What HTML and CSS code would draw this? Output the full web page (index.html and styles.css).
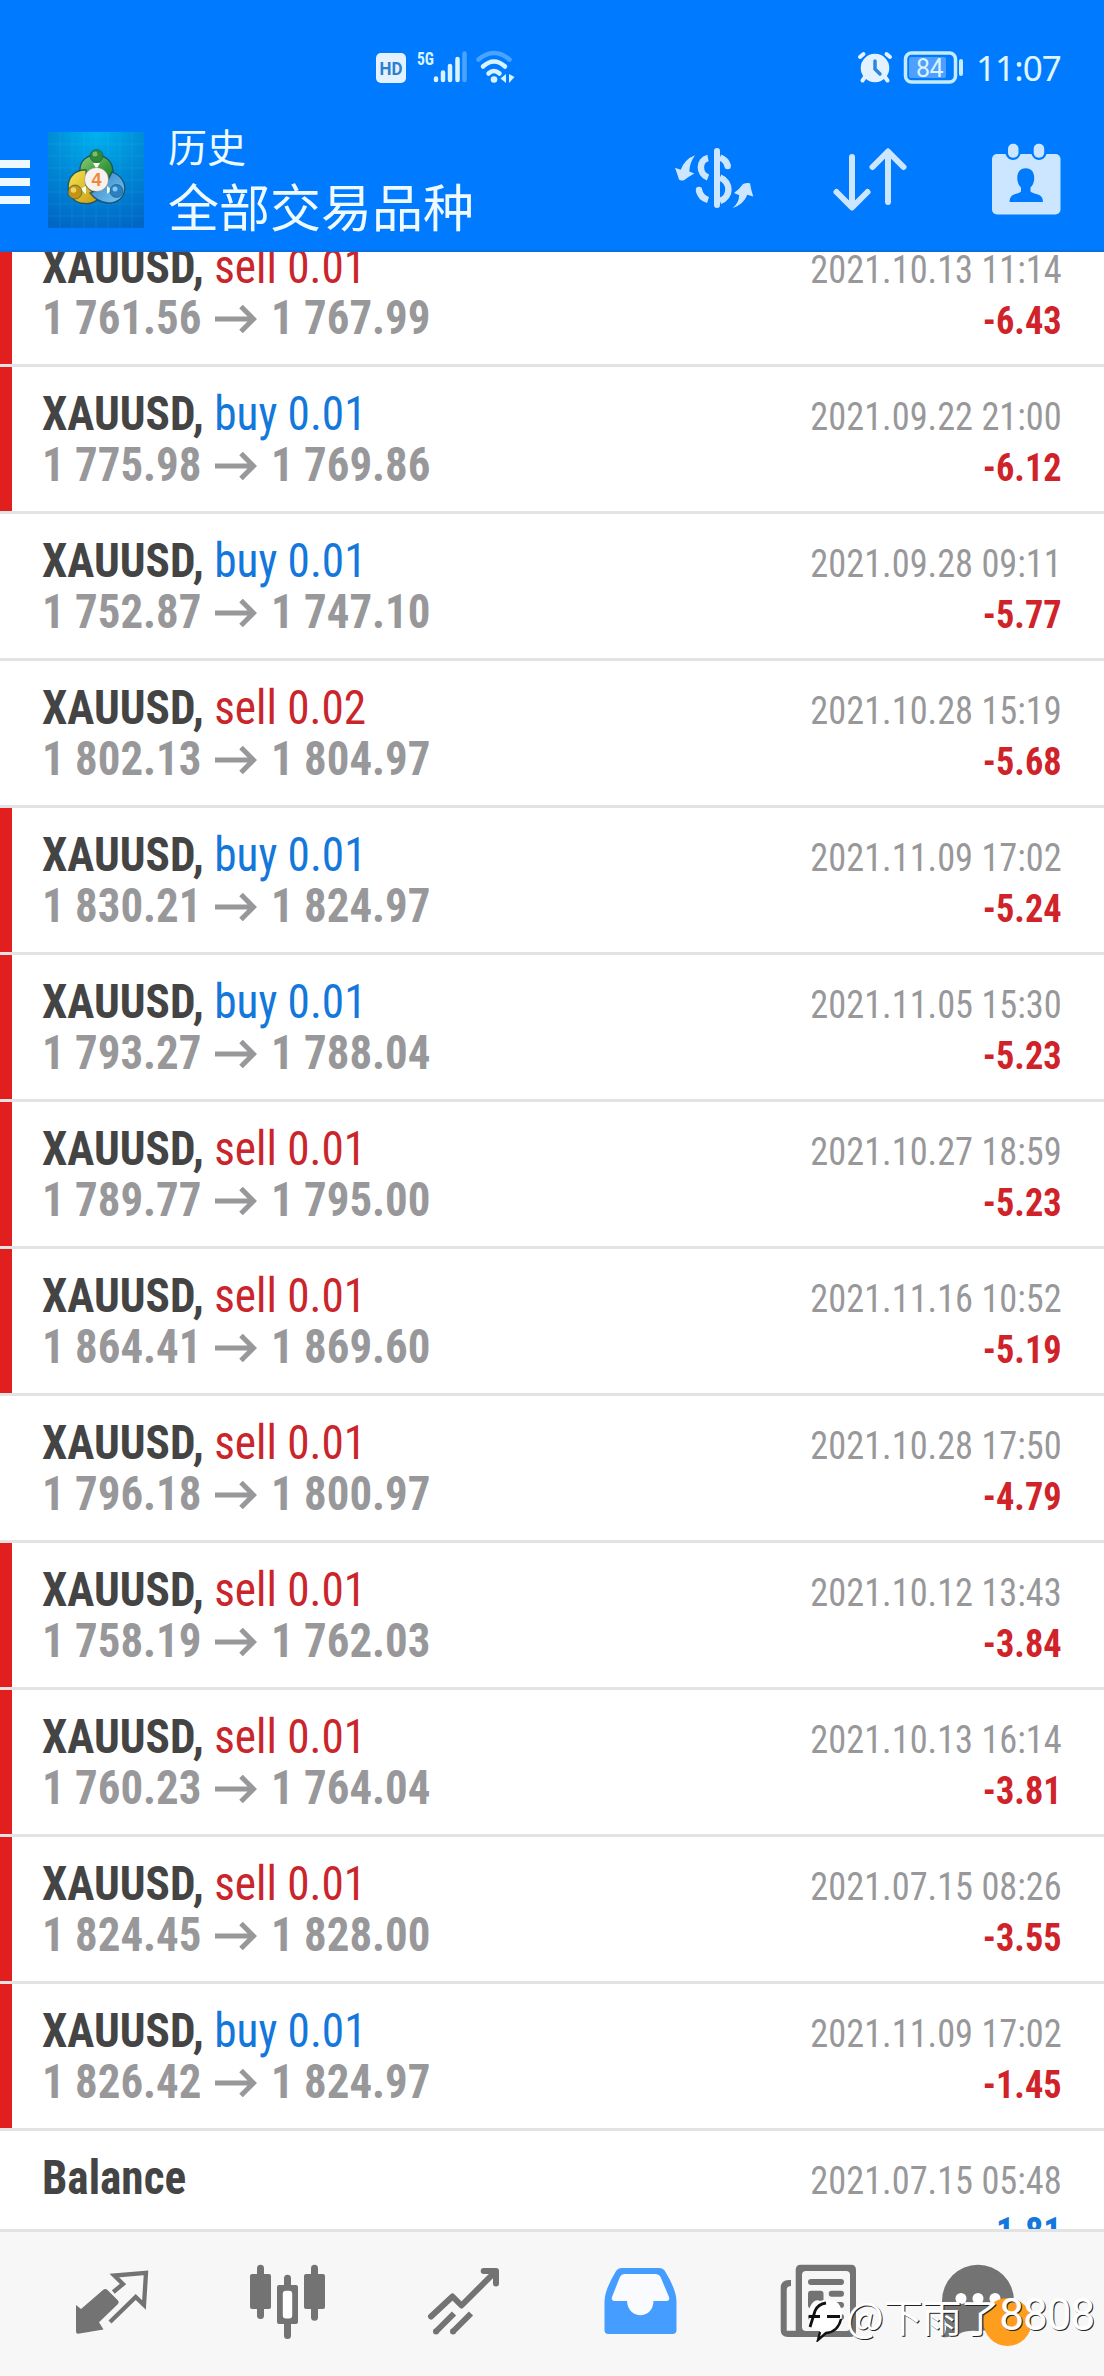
FILE: index.html
```html
<!DOCTYPE html>
<html lang="zh-CN">
<head>
<meta charset="utf-8">
<title>历史</title>
<link rel="stylesheet" href="styles.css">
</head>
<body>
<svg class="defs" width="0" height="0">
  <symbol id="arrow" viewBox="0 0 42 28"><path d="M0 14H39M26 1.5L38.500 14L26 26.500" fill="none" stroke="currentColor" stroke-width="5"/></symbol>
</svg>
<header class="header">
  <div class="status">
    <svg class="status-left" viewBox="370 45 150 45">
      <rect x="376" y="53" width="30" height="30" rx="5" fill="#e4f2ff"/>
      <text x="391" y="75" class="hd" text-anchor="middle" textLength="23" lengthAdjust="spacingAndGlyphs">HD</text>
      <text x="417" y="65" class="net" textLength="17" lengthAdjust="spacingAndGlyphs">5G</text>
      <g stroke="#d8f4ff" stroke-width="4.500" stroke-linecap="round"><path d="M436 78.500V80M443 72.500V80M450 66V80M457.500 59V80"/><path d="M464.500 53.500V80" stroke="#4aa4ff"/></g>
      <g fill="none" stroke-linecap="round" stroke-width="4.500"><path d="M478.500 59.500Q494 46.500 509.500 59.500" stroke="#4aa4ff"/><path d="M483 66.500Q494 56.500 505 66.500M488.500 73.500Q494 68.500 499.500 73.500" stroke="#d8f4ff"/></g>
      <circle cx="494" cy="79.500" r="3.300" fill="#d8f4ff"/>
      <path d="M506 74v9l-5.500-4.500zM509 74v9l5.500-6z" fill="#d8f4ff"/>
    </svg>
    <svg class="status-right" viewBox="850 45 120 45">
      <g stroke="#e4f2ff" stroke-width="4" stroke-linecap="round"><path d="M860 57l3.500-3M890 57l-3.500-3M865 77l-2.500 3.500M885 77l2.500 3.500"/></g>
      <circle cx="875" cy="68" r="14.300" fill="#e4f2ff"/>
      <path d="M875 61v8l5 5" fill="none" stroke="#2b86e0" stroke-width="3.500" stroke-linecap="round"/>
      <rect x="905.500" y="53" width="50" height="29" rx="6" fill="none" stroke="#c4ebff" stroke-width="3.500"/>
      <rect x="909" y="57" width="37" height="21" rx="2" fill="#4f9fff"/>
      <rect x="959" y="59" width="4" height="17" rx="2" fill="#c4ebff"/>
      <text x="929.500" y="76.500" class="battery" text-anchor="middle">84</text>
    </svg>
    <time class="clock">11:07</time>
  </div>
  <div class="appbar">
    <div class="menu"><i></i><i></i><i></i></div>
    <svg class="logo" viewBox="0 0 96 96">
      <defs>
        <radialGradient id="bg" cx=".5" cy="0" r="1.050"><stop offset="0" stop-color="#00b2ef"/><stop offset=".5" stop-color="#0089d6"/><stop offset="1" stop-color="#0067c6"/></radialGradient>
        <linearGradient id="gr" x2="1" y2="1"><stop offset="0" stop-color="#8fd07a"/><stop offset=".6" stop-color="#3b9a3c"/><stop offset="1" stop-color="#1f7a2c"/></linearGradient>
        <linearGradient id="ye" x2="1" y2="1"><stop offset="0" stop-color="#f6e650"/><stop offset="1" stop-color="#c79a10"/></linearGradient>
        <linearGradient id="bl" x2="1" y2="1"><stop offset="0" stop-color="#2f80c4"/><stop offset="1" stop-color="#7cc8f4"/></linearGradient>
      </defs>
      <rect width="96" height="96" fill="url(#bg)"/>
      <path d="M12 0V96M24 0V96M36 0V96M48 0V96M60 0V96M72 0V96M84 0V96M0 12H96M0 24H96M0 36H96M0 48H96M0 60H96M0 72H96M0 84H96" stroke="#5fc4f5" stroke-width=".6" opacity=".22"/>
      <g stroke="#123f50" stroke-opacity=".75" stroke-width="1.300">
        <path d="M32 40C30 17 67 17 65 42L60 50L36 44Z" fill="url(#gr)"/>
        <path d="M38 38C15 37 14 71 37 71.500Q46 72 51 66L38 54Z" fill="url(#ye)"/>
        <path d="M64 40C83 47 80 71 60 71Q49 70 42 61L56 56Z" fill="url(#bl)"/>
      </g>
      <path d="M45 31h7l-3.500 6zM32 57l6-3v8zM59 54l5 4-5 4z" fill="#f4ffe8"/>
      <g stroke="#123f50" stroke-opacity=".5"><circle cx="48.500" cy="24" r="6.500" fill="#2f8a38"/><circle cx="27" cy="60" r="7" fill="#c39414"/><circle cx="68.500" cy="59" r="6.500" fill="#2b80c4"/></g>
      <circle cx="47" cy="22" r="2.500" fill="#79bd72"/><circle cx="25.500" cy="58" r="2.800" fill="#eed462"/><circle cx="67" cy="57" r="2.500" fill="#81c7f1"/>
      <circle cx="48.500" cy="47.500" r="12" fill="#f7f2ee" stroke="#5a6a50" stroke-opacity=".4"/>
      <text x="48.500" y="54" class="four" text-anchor="middle">4</text>
    </svg>
    <div class="titles"><div class="title">历史</div><div class="subtitle">全部交易品种</div></div>
    <div class="actions">
      <svg viewBox="0 0 80 80">
        <rect x="40" y="8" width="6" height="60" rx="3" fill="#cce6ff"/>
        <g fill="none" stroke="#cce6ff" stroke-width="6.500"><path d="M34 18C24.500 20 24.500 34 34 37.500M46 17.500C50 19 53 22 53.500 26"/><path d="M46 37.500C57 42 57.500 57 46 61"/><path d="M25 50.500C26 55 29 58.500 34 60"/></g>
        <circle cx="53.700" cy="26" r="3.200" fill="#cce6ff"/><circle cx="25" cy="50" r="3.200" fill="#cce6ff"/>
        <path d="M21 15.300Q15.500 23 15.300 31.500L20.300 33.500Q14 37 10 40.300Q6.500 41 5 39.500Q3 33 1 27.700L6.700 29.700Q11 19 21 15.300ZM58.700 68Q65 63 65.200 55.300L60 53Q66 48.500 69 44Q73 42.500 76 43.300Q77 50 79.300 56.500L73.300 54.700Q70 64 58.700 68Z" fill="#cce6ff"/>
      </svg>
      <svg viewBox="0 0 80 80" fill="none" stroke="#cce6ff" stroke-width="6" stroke-linecap="round" stroke-linejoin="round"><path d="M22 17V67M6.500 52L22 67.500L37.500 52M58 62V12M42.500 27L58 11.500L73.500 27"/></svg>
      <svg viewBox="0 0 80 80">
        <rect x="6" y="14" width="68.500" height="60.500" rx="5" fill="#cce6ff"/>
        <path d="M19.500 13V14Q21 19.500 27 20Q33 19.500 34.500 14V13ZM45.500 13V14Q47 19.500 53 20Q59 19.500 60.500 14V13Z" fill="#007bff"/>
        <rect x="22" y="3.700" width="10.500" height="14" rx="5" fill="#cce6ff"/><rect x="47.700" y="3.700" width="10.500" height="14" rx="5" fill="#cce6ff"/>
        <path d="M39.700 28.300C46 28.300 48.500 33 48.200 39Q48 44 44.500 47.500V51.500Q46 53 52 54.500Q57 56 57 62H23.500Q23.500 56 28 54.500Q34 53 35 51.500V47.500Q31.500 44 31.300 39C31 33 33.500 28.300 39.700 28.300Z" fill="#007bff"/>
      </svg>
    </div>
  </div>
</header>

<main class="list">
  <div class="rows">
    <article class="row marked"><div class="deal"><p class="name"><b>XAUUSD,</b> <span class="sell">sell 0.01</span></p><p class="price"><span>1 761.56</span><svg><use href="#arrow"/></svg><span>1 767.99</span></p></div><div class="result"><time>2021.10.13 11:14</time><strong>-6.43</strong></div></article>
    <article class="row marked"><div class="deal"><p class="name"><b>XAUUSD,</b> <span class="buy">buy 0.01</span></p><p class="price"><span>1 775.98</span><svg><use href="#arrow"/></svg><span>1 769.86</span></p></div><div class="result"><time>2021.09.22 21:00</time><strong>-6.12</strong></div></article>
    <article class="row"><div class="deal"><p class="name"><b>XAUUSD,</b> <span class="buy">buy 0.01</span></p><p class="price"><span>1 752.87</span><svg><use href="#arrow"/></svg><span>1 747.10</span></p></div><div class="result"><time>2021.09.28 09:11</time><strong>-5.77</strong></div></article>
    <article class="row"><div class="deal"><p class="name"><b>XAUUSD,</b> <span class="sell">sell 0.02</span></p><p class="price"><span>1 802.13</span><svg><use href="#arrow"/></svg><span>1 804.97</span></p></div><div class="result"><time>2021.10.28 15:19</time><strong>-5.68</strong></div></article>
    <article class="row marked"><div class="deal"><p class="name"><b>XAUUSD,</b> <span class="buy">buy 0.01</span></p><p class="price"><span>1 830.21</span><svg><use href="#arrow"/></svg><span>1 824.97</span></p></div><div class="result"><time>2021.11.09 17:02</time><strong>-5.24</strong></div></article>
    <article class="row marked"><div class="deal"><p class="name"><b>XAUUSD,</b> <span class="buy">buy 0.01</span></p><p class="price"><span>1 793.27</span><svg><use href="#arrow"/></svg><span>1 788.04</span></p></div><div class="result"><time>2021.11.05 15:30</time><strong>-5.23</strong></div></article>
    <article class="row marked"><div class="deal"><p class="name"><b>XAUUSD,</b> <span class="sell">sell 0.01</span></p><p class="price"><span>1 789.77</span><svg><use href="#arrow"/></svg><span>1 795.00</span></p></div><div class="result"><time>2021.10.27 18:59</time><strong>-5.23</strong></div></article>
    <article class="row marked"><div class="deal"><p class="name"><b>XAUUSD,</b> <span class="sell">sell 0.01</span></p><p class="price"><span>1 864.41</span><svg><use href="#arrow"/></svg><span>1 869.60</span></p></div><div class="result"><time>2021.11.16 10:52</time><strong>-5.19</strong></div></article>
    <article class="row"><div class="deal"><p class="name"><b>XAUUSD,</b> <span class="sell">sell 0.01</span></p><p class="price"><span>1 796.18</span><svg><use href="#arrow"/></svg><span>1 800.97</span></p></div><div class="result"><time>2021.10.28 17:50</time><strong>-4.79</strong></div></article>
    <article class="row marked"><div class="deal"><p class="name"><b>XAUUSD,</b> <span class="sell">sell 0.01</span></p><p class="price"><span>1 758.19</span><svg><use href="#arrow"/></svg><span>1 762.03</span></p></div><div class="result"><time>2021.10.12 13:43</time><strong>-3.84</strong></div></article>
    <article class="row marked"><div class="deal"><p class="name"><b>XAUUSD,</b> <span class="sell">sell 0.01</span></p><p class="price"><span>1 760.23</span><svg><use href="#arrow"/></svg><span>1 764.04</span></p></div><div class="result"><time>2021.10.13 16:14</time><strong>-3.81</strong></div></article>
    <article class="row marked"><div class="deal"><p class="name"><b>XAUUSD,</b> <span class="sell">sell 0.01</span></p><p class="price"><span>1 824.45</span><svg><use href="#arrow"/></svg><span>1 828.00</span></p></div><div class="result"><time>2021.07.15 08:26</time><strong>-3.55</strong></div></article>
    <article class="row marked"><div class="deal"><p class="name"><b>XAUUSD,</b> <span class="buy">buy 0.01</span></p><p class="price"><span>1 826.42</span><svg><use href="#arrow"/></svg><span>1 824.97</span></p></div><div class="result"><time>2021.11.09 17:02</time><strong>-1.45</strong></div></article>
    <article class="row"><div class="deal"><p class="name"><b>Balance</b></p></div><div class="result"><time>2021.07.15 05:48</time><strong class="gain">1.81</strong></div></article>
  </div>
</main>

<nav class="tabs">
  <svg viewBox="0 0 120 144"><path d="M61.300 60L71 52L62.300 43.500L94 40.800L92 73L83.700 65L58 90" fill="none" stroke="#737373" stroke-width="4.300"/><path d="M51 58Q53.300 56 55.500 58L66 68.500Q67.500 70.300 66 72L47 90.300L51.500 97.500L26 101.700Q24 101.700 24 99.500V73L29 77Z" fill="#737373"/></svg>
  <svg viewBox="0 0 120 144" fill="#737373"><rect x="22" y="42" width="21" height="35" rx="2"/><rect x="29" y="32.700" width="7" height="54.300" rx="3.500"/><rect x="76" y="42" width="21" height="35" rx="2"/><rect x="83" y="32.700" width="7" height="56" rx="3.500"/><rect x="49" y="53" width="21" height="39" rx="2"/><rect x="56" y="42.700" width="7" height="64.300" rx="3.500"/><rect x="54.800" y="58.700" width="9.400" height="27.700" rx="3" fill="#fff"/></svg>
  <svg viewBox="0 0 120 144" fill="none" stroke="#737373" stroke-width="6"><path d="M27 84.500L48.500 64.500L57.500 73.500L91.500 39.500M79.700 39H92V51.500" stroke-linecap="round" stroke-linejoin="round"/><path d="M31.500 100L50 81.500M48.500 100L67 81.500"/><g fill="#737373" stroke="none"><circle cx="32" cy="99.500" r="3"/><circle cx="49" cy="99.500" r="3"/></g></svg>
  <svg viewBox="0 0 120 144"><path d="M42 36H79Q83.500 36 85.500 40Q96.500 58 96.500 70V98Q96.500 102 92.500 102H28.500Q24.500 102 24.500 98V70Q24.500 58 35.500 40Q37.500 36 42 36Z" fill="#449dff"/><path d="M45 42H75Q79.500 42 81 46L89 65Q90 69 86.500 69H73.500C73 88 48 88 47 69H34.500Q31 69 32 65L39.500 46Q41 42 45 42Z" fill="#f9fbfe"/></svg>
  <svg viewBox="0 0 120 144"><path d="M39.700 38Q39.700 32.700 45 32.700H95Q100 32.700 100 38V99Q100 105 94 105H32Q24.700 105 24.700 98V56Q24.700 48 33 48H35V54Q30.700 54 30.700 58V98.700H39.700Z" fill="#737373"/><rect x="46" y="39" width="48" height="60" rx="4" fill="#f7f7f7"/><g fill="#737373"><rect x="52" y="47" width="36" height="6" rx="3"/><rect x="52" y="58.700" width="15.500" height="17.500" rx="3"/><rect x="72.700" y="58.700" width="15.300" height="6" rx="3"/><rect x="72.700" y="70" width="15.300" height="6" rx="3"/><rect x="52" y="82" width="36" height="6" rx="3"/></g></svg>
  <svg viewBox="0 0 120 144"><path d="M10 69A36 36.300 0 0 1 82 69Q82 98 46 99Q34 98 27 102Q19 106 10.500 105Q15 100 14 91Q10 84 10 69Z" fill="#737373"/><g fill="#fff"><circle cx="29" cy="66.500" r="5.500"/><circle cx="46" cy="66.500" r="5.500"/><circle cx="63" cy="66.500" r="5.500"/></g><circle cx="75.500" cy="90" r="24" fill="#ff9d1c"/></svg>
</nav>

<div class="watermark">
  <svg viewBox="0 0 40 44"><path d="M4 9Q8 0 14 3Q24 -1 32 5Q38 12 35 23Q32 34 20 35L13 42L14 33Q4 31 3 20Z" fill="#fff"/><path d="M35 21Q32 34 20 35L12 42L14 34" fill="none" stroke="#111" stroke-width="2.400"/><path d="M3 18.500H14M21 18.500H34M4 29L9 13Q12 6 20 5" fill="none" stroke="#111" stroke-width="2.800"/></svg>
  <span class="at">@</span><span class="han">下雨了</span><span class="num">8808</span>
</div>
</body>
</html>
```
FILE: styles.css
```css
* { box-sizing: border-box; }
body {
  margin: 0;
  position: relative;
  width: 1104px;
  height: 2376px;
  display: flex;
  flex-direction: column;
  overflow: hidden;
  background: #fff;
  font-family: "Roboto Condensed", Roboto, "Noto Sans CJK SC", sans-serif;
}
p { margin: 0; }
svg { display: block; flex: none; }
.defs { position: absolute; }

.header {
  height: 252px;
  flex: none;
  background: #007bff;
  border-bottom: 2px solid #0a70e2;
}
.status {
  height: 110px;
  padding: 45px 46px 0 370px;
  display: flex;
  align-items: flex-start;
}
.status-left { width: 150px; height: 45px; }
.status-right { width: 120px; height: 45px; margin-left: 330px; }
.hd { font: 700 19px Roboto, sans-serif; fill: #2f7fd0; }
.net { font: 700 19px "Roboto Condensed", sans-serif; fill: #d8f4ff; }
.battery { font: 400 25px Roboto, sans-serif; letter-spacing: -.5px; fill: #d8f4ff; }
.clock {
  margin-left: 6px;
  font: 400 35px/46px "Noto Sans", sans-serif;
  letter-spacing: -.9px;
  color: #e0f6ff;
}
.appbar {
  height: 140px;
  display: flex;
  align-items: flex-start;
  padding-right: 38px;
}
.menu {
  width: 30px;
  padding-top: 50px;
  display: grid;
  gap: 10px;
}
.menu i { height: 8px; background: #eef8ff; }
.logo { width: 96px; height: 96px; margin: 22px 0 0 18px; }
.four { font: 700 18px "Liberation Sans", sans-serif; fill: #f0883c; }
.titles {
  padding: 10px 0 0 24px;
  font-family: "Noto Sans CJK SC", sans-serif;
  color: #eefaff;
}
.title { font-size: 39px; line-height: 50px; }
.subtitle { font-size: 51px; line-height: 70px; }
.actions {
  margin: 30px 0 0 auto;
  display: flex;
  gap: 76px;
}
.actions svg { width: 80px; height: 80px; }

.list { height: 1977px; flex: none; overflow: hidden; }
.rows { margin-top: -32px; }
.row {
  position: relative;
  height: 147px;
  padding: 22px 42px 0 42px;
  border-bottom: 3px solid #e3e3e3;
  display: flex;
  justify-content: space-between;
  white-space: pre;
}
.marked::before {
  content: "";
  position: absolute;
  left: 0;
  top: 0;
  bottom: 0;
  width: 12px;
  background: #e11f1f;
}
.name {
  font-size: 48px;
  line-height: 50px;
  transform: scaleX(.942);
  transform-origin: left;
}
.name b { font-weight: 700; color: #444; }
.sell { color: #c9252b; }
.buy { color: #1377dc; }
.price {
  display: flex;
  align-items: center;
  font-size: 48px;
  font-weight: 700;
  line-height: 51px;
  color: #98989a;
}
.price span { width: 159px; transform: scaleX(.935); transform-origin: left; }
.price svg { width: 42px; height: 28px; margin: 2px 14px 0; }
.result {
  padding-top: 3px;
  display: flex;
  flex-direction: column;
  align-items: flex-end;
  font-size: 39px;
  transform: scaleX(.932);
  transform-origin: right;
}
.result time { line-height: 50px; color: #98989a; }
.result strong { line-height: 53px; color: #cf2329; }
.result .gain { color: #1377dc; }

.tabs {
  height: 147px;
  flex: none;
  padding: 0 24px;
  display: grid;
  grid-template-columns: repeat(6, 176px);
  justify-items: center;
  background: #f7f7f7;
  border-top: 3px solid #e3e3e3;
}
.tabs svg { width: 120px; height: 144px; }

.watermark {
  position: absolute;
  left: 806px;
  top: 2289px;
  display: flex;
  align-items: center;
  height: 52px;
  color: #fff;
  text-shadow: 1px 1px 0 #222;
}
.watermark svg { width: 40px; height: 44px; margin-top: 10px; }
.at { font: 400 40px "Noto Sans CJK SC", sans-serif; width: 38px; }
.han { font: 400 39px "Noto Sans CJK SC", sans-serif; letter-spacing: -.6px; }
.num { font: 400 44px Roboto, sans-serif; letter-spacing: -1px; }
```
